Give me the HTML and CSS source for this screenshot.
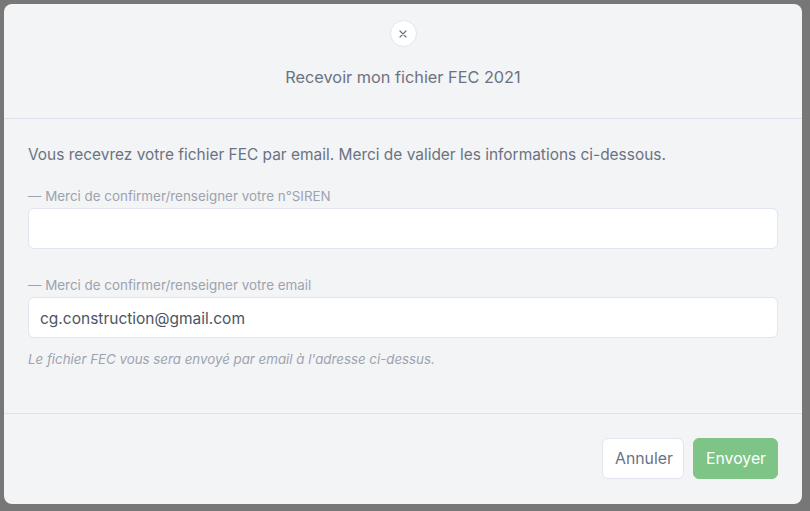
FILE: index.html
```html
<!DOCTYPE html>
<html lang="fr">
<head>
<meta charset="utf-8">
<title>Recevoir mon fichier FEC 2021</title>
<link rel="stylesheet" href="styles.css">
</head>
<body>
<div class="overlay">
  <div class="modal">
    <div class="modal-header">
      <button class="close" type="button" aria-label="Fermer">
        <svg width="8" height="8" viewBox="0 0 8 8"><path d="M1 1L7 7M7 1L1 7" stroke="#6b7280" stroke-width="1.2" stroke-linecap="round"/></svg>
      </button>
      <h2 class="title">Recevoir mon fichier FEC 2021</h2>
    </div>
    <div class="modal-body">
      <p class="intro">Vous recevrez votre fichier FEC par email. Merci de valider les informations ci-dessous.</p>
      <div class="field">
        <label class="label">— Merci de confirmer/renseigner votre n°SIREN</label>
        <input class="input" type="text" value="">
      </div>
      <div class="field">
        <label class="label">— Merci de confirmer/renseigner votre email</label>
        <input class="input" type="text" value="cg.construction@gmail.com">
        <p class="help">Le fichier FEC vous sera envoyé par email à l'adresse ci-dessus.</p>
      </div>
    </div>
    <div class="modal-footer">
      <button class="btn btn-cancel" type="button">Annuler</button>
      <button class="btn btn-send" type="button">Envoyer</button>
    </div>
  </div>
</div>
</body>
</html>
```

FILE: styles.css
```css
* { box-sizing: border-box; }
html, body {
  margin: 0;
  padding: 0;
  height: 100%;
}
body {
  background: #777777;
  font-family: Inter, "Noto Sans", "Liberation Sans", sans-serif;
  overflow: hidden;
}
.overlay {
  padding: 4px 4px 0 4px;
}
.modal {
  width: 798px;
  height: 500px;
  background: #f3f4f6;
  border-radius: 8px;
  display: flex;
  flex-direction: column;
}
.modal-header {
  display: flex;
  flex-direction: column;
  align-items: center;
  padding-top: 16px;
  height: 115px;
  border-bottom: 1px solid #dde3ee;
}
.close {
  width: 27px;
  height: 27px;
  border-radius: 50%;
  border: 1px solid #e0e5f0;
  background: #ffffff;
  padding: 0;
  display: flex;
  align-items: center;
  justify-content: center;
  cursor: pointer;
}
.title {
  margin: 20px 0 0 0;
  font-size: 16.3px;
  font-weight: 400;
  color: #6b7280;
  line-height: 20px;
}
.modal-body {
  padding: 26px 24px 0 24px;
  height: 295px;
  border-bottom: 1px solid #dde3ee;
}
.intro {
  margin: 0;
  font-size: 15.45px;
  line-height: 20px;
  color: #6b7280;
}
.field {
  display: flex;
  flex-direction: column;
}
.label {
  margin-top: 23px;
  font-size: 13.4px;
  line-height: 16px;
  color: #9ca3af;
}
.field + .field .label {
  margin-top: 28px;
}
.input {
  margin-top: 4px;
  height: 41px;
  width: 750px;
  border: 1px solid #e0e5f0;
  border-radius: 6px;
  background: #ffffff;
  padding: 2px 11px 0 11px;
  font-family: inherit;
  font-size: 15.5px;
  color: #4b5563;
  outline: none;
}
.help {
  margin: 13px 0 0 0;
  font-size: 13.3px;
  font-style: italic;
  line-height: 16px;
  color: #9ca3af;
}
.modal-footer {
  display: flex;
  justify-content: flex-end;
  gap: 9px;
  padding: 24px 24px 0 24px;
}
.btn {
  height: 41px;
  border-radius: 6px;
  font-family: inherit;
  font-size: 15.8px;
  padding: 0 12px;
  cursor: pointer;
}
.btn-cancel {
  width: 82px;
  background: #ffffff;
  border: 1px solid #e0e5f0;
  color: #6b7280;
}
.btn-send {
  width: 85px;
  background: #7dc486;
  border: 1px solid #7dc486;
  color: #ffffff;
}
```
